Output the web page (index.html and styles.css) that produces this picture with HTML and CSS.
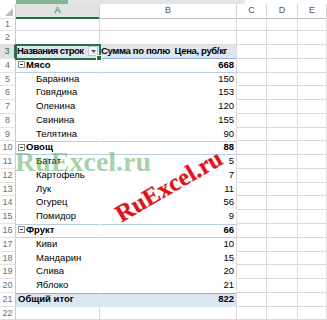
FILE: index.html
```html
<!DOCTYPE html>
<html lang="ru">
<head>
<meta charset="utf-8">
<title>Сводная таблица</title>
<link rel="stylesheet" href="styles.css">
</head>
<body>
<div class="page">
  <div class="topbar"><div class="tb-green"></div><div class="tb-grey"></div></div>
  <div class="sheet">
    <div class="row hdr">
      <div class="rn corner"><svg class="corner-tri" width="8" height="8" viewBox="0 0 8 8"><polygon points="8,0 8,8 0,8" fill="#bcbcbc"/></svg></div>
      <div class="ch sel">A</div><div class="ch">B</div><div class="ch">C</div><div class="ch">D</div><div class="ch">E</div>
    </div>
    <div class="row"><div class="rn">1</div><div class="c"></div><div class="c"></div><div class="c"></div><div class="c"></div><div class="c"></div></div>
    <div class="row"><div class="rn">2</div><div class="c"></div><div class="c"></div><div class="c"></div><div class="c"></div><div class="c"></div></div>
    <div class="row ph">
      <div class="rn rsel">3</div>
      <div class="c pa active"><span class="hname">Названия строк</span><span class="dd"><svg width="5" height="3" viewBox="0 0 5 3"><polygon points="0,0 5,0 2.5,3" fill="#555"/></svg></span></div>
      <div class="c pb lefttext">Сумма по полю&nbsp; Цена, руб/кг</div>
      <div class="c"></div><div class="c"></div><div class="c"></div>
    </div>
    <div class="row grp"><div class="rn">4</div><div class="c pa"><svg class="tg" width="7" height="7" viewBox="0 0 7 7"><rect x="0.5" y="0.5" width="6" height="6" fill="#fff" stroke="#8e8e8e"/><line x1="2" y1="3.5" x2="5" y2="3.5" stroke="#333"/></svg>Мясо</div><div class="c pb">668</div><div class="c"></div><div class="c"></div><div class="c"></div></div>
    <div class="row"><div class="rn">5</div><div class="c pa item">Баранина</div><div class="c pb">150</div><div class="c"></div><div class="c"></div><div class="c"></div></div>
    <div class="row"><div class="rn">6</div><div class="c pa item">Говядина</div><div class="c pb">153</div><div class="c"></div><div class="c"></div><div class="c"></div></div>
    <div class="row"><div class="rn">7</div><div class="c pa item">Оленина</div><div class="c pb">120</div><div class="c"></div><div class="c"></div><div class="c"></div></div>
    <div class="row"><div class="rn">8</div><div class="c pa item">Свинина</div><div class="c pb">155</div><div class="c"></div><div class="c"></div><div class="c"></div></div>
    <div class="row"><div class="rn">9</div><div class="c pa item">Телятина</div><div class="c pb">90</div><div class="c"></div><div class="c"></div><div class="c"></div></div>
    <div class="row grp grp-top"><div class="rn">10</div><div class="c pa"><svg class="tg" width="7" height="7" viewBox="0 0 7 7"><rect x="0.5" y="0.5" width="6" height="6" fill="#fff" stroke="#8e8e8e"/><line x1="2" y1="3.5" x2="5" y2="3.5" stroke="#333"/></svg>Овощ</div><div class="c pb">88</div><div class="c"></div><div class="c"></div><div class="c"></div></div>
    <div class="row"><div class="rn">11</div><div class="c pa item">Батат</div><div class="c pb">5</div><div class="c"></div><div class="c"></div><div class="c"></div></div>
    <div class="row"><div class="rn">12</div><div class="c pa item">Картофель</div><div class="c pb">7</div><div class="c"></div><div class="c"></div><div class="c"></div></div>
    <div class="row"><div class="rn">13</div><div class="c pa item">Лук</div><div class="c pb">11</div><div class="c"></div><div class="c"></div><div class="c"></div></div>
    <div class="row"><div class="rn">14</div><div class="c pa item">Огурец</div><div class="c pb">56</div><div class="c"></div><div class="c"></div><div class="c"></div></div>
    <div class="row"><div class="rn">15</div><div class="c pa item">Помидор</div><div class="c pb">9</div><div class="c"></div><div class="c"></div><div class="c"></div></div>
    <div class="row grp grp-top"><div class="rn">16</div><div class="c pa"><svg class="tg" width="7" height="7" viewBox="0 0 7 7"><rect x="0.5" y="0.5" width="6" height="6" fill="#fff" stroke="#8e8e8e"/><line x1="2" y1="3.5" x2="5" y2="3.5" stroke="#333"/></svg>Фрукт</div><div class="c pb">66</div><div class="c"></div><div class="c"></div><div class="c"></div></div>
    <div class="row"><div class="rn">17</div><div class="c pa item">Киви</div><div class="c pb">10</div><div class="c"></div><div class="c"></div><div class="c"></div></div>
    <div class="row"><div class="rn">18</div><div class="c pa item">Мандарин</div><div class="c pb">15</div><div class="c"></div><div class="c"></div><div class="c"></div></div>
    <div class="row"><div class="rn">19</div><div class="c pa item">Слива</div><div class="c pb">20</div><div class="c"></div><div class="c"></div><div class="c"></div></div>
    <div class="row"><div class="rn">20</div><div class="c pa item">Яблоко</div><div class="c pb">21</div><div class="c"></div><div class="c"></div><div class="c"></div></div>
    <div class="row total"><div class="rn">21</div><div class="c pa">Общий итог</div><div class="c pb">822</div><div class="c"></div><div class="c"></div><div class="c"></div></div>
    <div class="row"><div class="rn">22</div><div class="c"></div><div class="c"></div><div class="c"></div><div class="c"></div><div class="c"></div></div>
  </div>
  <div class="wm wm-green">RuExcel.ru</div>
  <div class="wm wm-red">RuExcel.ru</div>
</div>
</body>
</html>
```

FILE: styles.css
```css
html, body {
  margin: 0;
  padding: 0;
  background: #fff;
}
body {
  width: 327px;
  height: 320px;
  overflow: hidden;
  font-family: "Liberation Sans", Arial, sans-serif;
}
.page {
  position: relative;
  width: 327px;
  height: 320px;
  overflow: hidden;
}
.topbar {
  display: flex;
  height: 4px;
}
.tb-green {
  margin-left: 16px;
  width: 52px;
  background: #84b698;
}
.tb-grey {
  width: 177px;
  background: #e4e4e4;
}
.sheet {
  display: grid;
  grid-template-rows: 13.5px;
  grid-auto-rows: 13.78px;
}
.row {
  display: grid;
  grid-template-columns: 16px 84px 137px 30px 31px 1fr;
}
.row > div {
  box-sizing: border-box;
  border-right: 1px solid #dadada;
  border-bottom: 1px solid #dadada;
  font-size: 9.5px;
  line-height: 12.78px;
  white-space: nowrap;
  color: #000;
  padding: 0 2px;
  min-width: 0;
}
.row > .rn {
  text-align: center;
  color: #6e6e6e;
  font-size: 9px;
  padding: 0;
  border-right-color: #c9c9c9;
  border-bottom-color: #e2e2e2;
}
.row > .rsel {
  background: #e1e1e1;
  color: #217346;
  border-right: 2px solid #217346;
}
.hdr > div {
  text-align: center;
  color: #555;
  font-size: 9px;
  line-height: 12.5px;
  border-bottom-color: #bdbdbd;
}
.hdr > .ch {
  border-right-color: #d4d4d4;
}
.hdr > .sel {
  background: #e1e1e1;
  color: #217346;
  border-bottom: 2px solid #217346;
}
.corner {
  position: relative;
}
.corner-tri {
  position: absolute;
  right: 2px;
  bottom: 2px;
}
.row > .pa {
  border-right-color: transparent;
  border-bottom-color: transparent;
  overflow: visible;
}
.row > .pb {
  border-bottom-color: transparent;
  text-align: right;
  padding-right: 2px;
  overflow: visible;
}
.row > .lefttext {
  text-align: left;
  padding-left: 1px;
}
.ph > .pa, .ph > .pb {
  background: #dce6f1;
  border-bottom: 1px solid #95b3d7;
  font-weight: bold;
  letter-spacing: -0.35px;
}
.ph > .pa {
  padding-left: 1px;
}
.hname {
  letter-spacing: -0.55px;
}
.active {
  position: relative;
  z-index: 2;
  outline: 2px solid #217346;
  outline-offset: -1px;
}
.active::after {
  content: "";
  position: absolute;
  right: -3px;
  bottom: -3px;
  width: 4px;
  height: 4px;
  background: #217346;
  border: 1px solid #fff;
}
.dd {
  position: absolute;
  right: 1px;
  top: 1px;
  width: 10px;
  height: 10px;
  box-sizing: border-box;
  border: 1px solid #c6c6c6;
  background: #f4f4f4;
  display: flex;
  align-items: center;
  justify-content: center;
}
.dd svg {
  display: block;
}
.grp > .pa, .grp > .pb {
  font-weight: bold;
  border-bottom: 1px solid #b8cce4;
}
.grp-top > .pa, .grp-top > .pb {
  box-shadow: inset 0 1px 0 #b8cce4;
}
.tg {
  display: inline-block;
  vertical-align: -0.5px;
  margin-right: 1px;
}
.row > .item {
  padding-left: 20px;
}
.total > .pa, .total > .pb {
  background: #dce6f1;
  font-weight: bold;
  box-shadow: inset 0 1px 0 #95b3d7;
}
.wm {
  position: absolute;
  font-family: "Liberation Serif", "Times New Roman", serif;
  font-weight: bold;
  white-space: nowrap;
  pointer-events: none;
}
.wm-green {
  left: 15px;
  top: 148px;
  font-size: 28px;
  line-height: 28px;
  color: rgba(80, 165, 80, 0.5);
}
.wm-red {
  left: 109px;
  top: 173px;
  font-size: 24.5px;
  line-height: 25px;
  color: #e3121b;
  transform: rotate(-30deg);
  transform-origin: 50% 50%;
  text-shadow: 0 0 1px rgba(120, 0, 0, 0.4);
}
```
